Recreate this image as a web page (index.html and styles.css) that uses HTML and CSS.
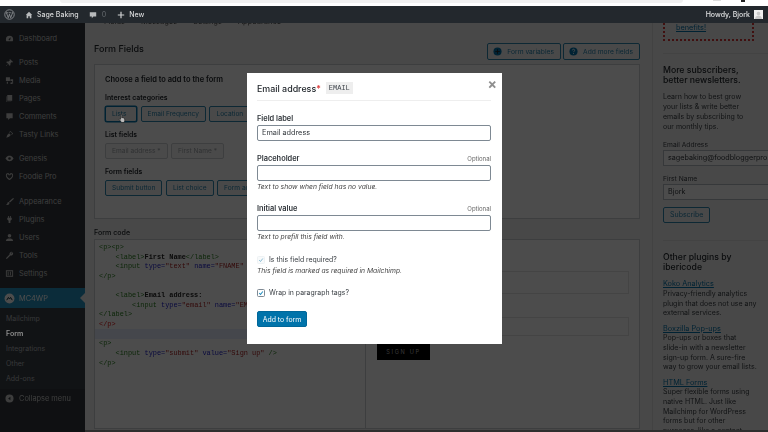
FILE: index.html
```html
<!DOCTYPE html>
<html lang="en">
<head>
<meta charset="utf-8">
<title>Form Fields</title>
<link rel="stylesheet" href="styles.css">
</head>
<body>
<div class="app">
  <div class="chrome"><div class="chrome-pill"></div><span class="chrome-dot"></span><span class="chrome-dot chrome-dark"></span></div>
  <header class="adminbar">
    <svg class="ab-logo" viewBox="0 0 20 20"><circle cx="10" cy="10" r="8.6" fill="none" stroke="currentColor" stroke-width="1.6"/><path d="M4.500 7l3.200 9 2.200-6.500L12.200 16l3.300-9M3.500 6.800h4M8.500 6.800h4M14 6.800h2.500" fill="none" stroke="currentColor" stroke-width="1.500"/></svg>
    <svg class="ab-icon home" viewBox="0 0 20 20"><path d="M10 2l8 8h-2v8h-4v-5H8v5H4v-8H2z" fill="currentColor"/></svg>
    <span class="ab-site">Sage Baking</span>
    <svg class="ab-icon bubble" viewBox="0 0 20 20"><path d="M2 3h16v11h-7l-4 4v-4H2z" fill="currentColor"/></svg>
    <span class="ab-count">0</span>
    <svg class="ab-icon plus" viewBox="0 0 20 20"><path d="M8.500 2h3v6.500H18v3h-6.500V18h-3v-6.500H2v-3h6.500z" fill="currentColor"/></svg>
    <span class="ab-new">New</span>
    <span class="ab-howdy">Howdy, Bjork</span>
    <span class="ab-avatar"><svg viewBox="0 0 20 20"><circle cx="10" cy="8" r="4" fill="#c9c9c9"/><path d="M2 20c1-6 5-7 8-7s7 1 8 7z" fill="#c9c9c9"/></svg></span>
  </header>
  <div class="workspace">
    <nav class="sidebar">
      <ul class="menu menu-first">
        <li><svg viewBox="0 0 20 20"><path d="M10 4a8 8 0 0 0-8 8c0 1.500.4 2.800 1 4h14c.6-1.200 1-2.500 1-4a8 8 0 0 0-8-8zm0 10a2 2 0 0 1-1-3.700L13 7l-1.300 5.400A2 2 0 0 1 10 14z"/></svg>Dashboard</li>
      </ul>
      <ul class="menu">
        <li><svg viewBox="0 0 20 20"><path d="M11 2l7 7-2 1-1-1-3 3 0 4-2 1-3-4-4 5-1-1 5-4-4-3 1-2 4 0 3-3-1-1z"/></svg>Posts</li>
        <li><svg viewBox="0 0 20 20"><path d="M2 3h9v8H2zM12 7h6v10h-2v-6h-4zM4 13h2.500v4H4z"/><circle cx="14" cy="16" r="2"/></svg>Media</li>
        <li><svg viewBox="0 0 20 20"><path d="M5 2h11v13H5zM3 5h1v12h10v1H3z"/></svg>Pages</li>
        <li><svg viewBox="0 0 20 20"><path d="M3 3h14v11h-6l-4 4v-4H3z"/></svg>Comments</li>
        <li><svg viewBox="0 0 20 20"><path d="M3 17l2-6 4-4 4 4-4 4zM9 5l3-3 6 6-3 3-1-1 2-2-4-4-2 2z"/></svg>Tasty Links</li>
      </ul>
      <ul class="menu">
        <li><svg viewBox="0 0 20 20"><path d="M1 10c3-5 6-6 9-6s6 1 9 6c-3 5-6 6-9 6s-6-1-9-6zm9 3a3 3 0 1 0 0-6 3 3 0 0 0 0 6z"/></svg>Genesis</li>
        <li><svg viewBox="0 0 20 20"><path d="M10 18C3 13 2 10 2 7a4 4 0 0 1 8-1 4 4 0 0 1 8 1c0 3-1 6-8 11zm0-3c5-3.500 6-6 6-8a2 2 0 0 0-4 0h-4a2 2 0 0 0-4 0c0 2 1 4.500 6 8z"/></svg>Foodie Pro</li>
      </ul>
      <ul class="menu menu-wide">
        <li><svg viewBox="0 0 20 20"><path d="M18 2l-9 8 2 2 9-8zM8 11c-3 0-3 3-3 4 0 1-1 2-3 2 3 2 8 1 8-4z"/></svg>Appearance</li>
        <li><svg viewBox="0 0 20 20"><path d="M7 2h2v4h2V2h2v4h2v4l-3 3v5H8v-5l-3-3V6h2z"/></svg>Plugins</li>
        <li><svg viewBox="0 0 20 20"><circle cx="10" cy="6" r="4"/><path d="M2 18c0-5 4-6 8-6s8 1 8 6z"/></svg>Users</li>
        <li><svg viewBox="0 0 20 20"><path d="M17 3l-3 3-1-1 3-3a5 5 0 0 0-6 6L2 16l2 2 8-8a5 5 0 0 0 6-6z"/></svg>Tools</li>
        <li><svg viewBox="0 0 20 20"><path d="M2 3h16v14H2zm2 2v10h12V5zM6 6h2v8H6zm5 0h2v8h-2z"/></svg>Settings</li>
      </ul>
      <div class="menu-current">
        <svg viewBox="0 0 20 20"><circle cx="10" cy="10" r="9"/><path d="M5 13l3-5 2 3 2-3 3 5" fill="none" stroke="#0c3242" stroke-width="1.800"/></svg>
        MC4WP<span class="menu-arrow"></span>
      </div>
      <ul class="submenu">
        <li>Mailchimp</li>
        <li class="submenu-current">Form</li>
        <li>Integrations</li>
        <li>Other</li>
        <li>Add-ons</li>
      </ul>
      <div class="collapse"><svg viewBox="0 0 20 20"><path d="M10 1a9 9 0 1 0 0 18 9 9 0 0 0 0-18zm2 5v8L7 10z"/></svg>Collapse menu</div>
    </nav>
    <main class="main">
      <div class="content">
        <div class="tabs"><span>Fields</span><span>Messages</span><span>Settings</span><span>Appearance</span></div>
        <div class="head-row">
          <h1>Form Fields</h1>
          <div class="head-actions">
            <button class="btn icon-btn"><svg viewBox="0 0 20 20"><circle cx="10" cy="10" r="9" fill="#0073aa"/><path d="M5 10h10M10 5v10" stroke="#23282d" stroke-width="2"/></svg>Form variables</button>
            <button class="btn icon-btn"><svg viewBox="0 0 20 20"><circle cx="10" cy="10" r="9" fill="#0073aa"/><path d="M7.500 7.500c0-3.500 5-3.500 5 0 0 2-2.500 2-2.500 4M10 13.500v2" fill="none" stroke="#fff" stroke-width="2"/></svg>Add more fields</button>
          </div>
        </div>
        <section class="chooser">
          <h2>Choose a field to add to the form</h2>
          <h3>Interest categories</h3>
          <div class="btn-row"><button class="btn btn-focus">Lists</button><button class="btn">Email Frequency</button><button class="btn">Location</button></div>
          <h3>List fields</h3>
          <div class="btn-row"><button class="btn btn-off">Email address *</button><button class="btn btn-off">First Name *</button></div>
          <h3>Form fields</h3>
          <div class="btn-row"><button class="btn">Submit button</button><button class="btn">List choice</button><button class="btn">Form action</button></div>
        </section>
        <h4 class="code-title">Form code</h4>
        <div class="code-wrap">
<pre class="code"><span class="t-g">&lt;p&gt;&lt;p&gt;</span>
    <span class="t-g">&lt;label&gt;</span><b>First Name</b><span class="t-g">&lt;/label&gt;</span>
    <span class="t-g">&lt;input</span> <span class="t-b">type=</span><span class="t-r">"text"</span> <span class="t-b">name=</span><span class="t-r">"FNAME"</span> <span class="t-g">/&gt;</span>
<span class="t-g">&lt;/p&gt;</span>

    <span class="t-g">&lt;label&gt;</span><b>Email address:</b>
        <span class="t-g">&lt;input</span> <span class="t-b">type=</span><span class="t-r">"email"</span> <span class="t-b">name=</span><span class="t-r">"EMAIL"</span> <span class="t-g">/&gt;</span>
<span class="t-g">&lt;/label&gt;</span>
<span class="t-red">&lt;/p&gt;</span>
<span class="code-hl"> </span><span class="t-g">&lt;p&gt;</span>
    <span class="t-g">&lt;input</span> <span class="t-b">type=</span><span class="t-r">"submit"</span> <span class="t-b">value=</span><span class="t-r">"Sign up"</span> <span class="t-g">/&gt;</span>
<span class="t-g">&lt;/p&gt;</span></pre>
          <div class="preview">
            <div class="pv-input pv-a"></div>
            <div class="pv-input pv-b"></div>
            <div class="signup">SIGN UP</div>
          </div>
        </div>
      </div>
      <aside class="side">
        <div class="promo"><a href="#">benefits!</a></div>
        <section class="side-block side-news">
          <h3>More subscribers, better newsletters.</h3>
          <p>Learn how to best grow your lists &amp; write better emails by subscribing to our monthly tips.</p>
          <label>Email Address</label>
          <div class="side-input">sagebaking@foodbloggerpro.com</div>
          <label>First Name</label>
          <div class="side-input">Bjork</div>
          <button class="btn side-btn">Subscribe</button>
        </section>
        <section class="side-block side-plugins">
          <h3>Other plugins by ibericode</h3>
          <a href="#">Koko Analytics</a>
          <p>Privacy-friendly analytics<br>plugin that does not use any<br>external services.</p>
          <a href="#">Boxzilla Pop-ups</a>
          <p>Pop-ups or boxes that<br>slide-in with a newsletter<br>sign-up form. A sure-fire<br>way to grow your email lists.</p>
          <a href="#">HTML Forms</a>
          <p>Super flexible forms using<br>native HTML. Just like<br>Mailchimp for WordPress<br>forms but for other<br>purposes, like a contact<br>form.</p>
        </section>
      </aside>
    </main>
    <div class="overlay"></div>
    <svg class="cursor" viewBox="0 0 14 16"><path d="M4 1.500c1-.6 1.800 0 1.800 1V7l1-.3 1 .3 1 .2 1.200.5.600 3-1 3.500H5.500L2 9.500l.6-1 1.400.8z" fill="#bbb" stroke="#000" stroke-width=".8"/></svg>
  </div>
  <div class="modal">
    <div class="modal-head">
      <span class="modal-title">Email address<em>*</em></span>
      <code>EMAIL</code>
      <span class="modal-close">×</span>
    </div>
    <div class="field field-first">
      <div class="field-label"><strong>Field label</strong></div>
      <div class="input">Email address</div>
    </div>
    <div class="field">
      <div class="field-label"><strong>Placeholder</strong><small>Optional</small></div>
      <div class="input"></div>
      <p class="hint">Text to show when field has no value.</p>
    </div>
    <div class="field">
      <div class="field-label"><strong>Initial value</strong><small>Optional</small></div>
      <div class="input"></div>
      <p class="hint">Text to prefill this field with.</p>
    </div>
    <div class="check check-off"><span class="box box-off"><svg viewBox="0 0 10 10"><path d="M2 5l2.200 2.500L8 2.500" fill="none" stroke="#7eb6d0" stroke-width="1.500"/></svg></span>Is this field required?</div>
    <p class="hint hint-req">This field is marked as required in Mailchimp.</p>
    <div class="check check-wrap"><span class="box"><svg viewBox="0 0 10 10"><path d="M2 5l2.200 2.500L8 2.500" fill="none" stroke="#1e8cbe" stroke-width="1.700"/></svg></span>Wrap in paragraph tags?</div>
    <button class="primary">Add to form</button>
  </div>
</div>
</body>
</html>
```
FILE: styles.css
```css
* { box-sizing: border-box; }
html, body { margin: 0; height: 100%; background: #000; }
body { font-family: Inter, "Liberation Sans", sans-serif; overflow: hidden; }
ul { list-style: none; margin: 0; padding: 0; }
h1, h2, h3, h4, p { margin: 0; }

.app { position: relative; width: 768px; height: 432px; overflow: hidden; display: flex; flex-direction: column; background: #f1f1f1; }

.chrome { height: 6px; background: #fff; padding-left: 60px; flex: none; display: flex; }
.chrome-pill { width: 623px; height: 3px; background: #f1f1f1; border-radius: 0 0 3px 3px; }
.chrome-dot { width: 8px; height: 1px; margin-left: 30px; background: #ddd; }
.chrome-dark { width: 4px; height: 2px; margin-left: 20px; background: #222; }

.adminbar { position: relative; z-index: 3; height: 17px; flex: none; background: #23282d; color: #c9cbcd; display: flex; align-items: center; font-size: 7px; font-weight: 500; padding-right: 5px; filter: blur(.4px); }
.ab-logo { width: 11px; height: 11px; margin-left: 4px; color: #8f9396; }
.ab-icon { width: 8px; height: 8px; color: #b8babc; }
.home { margin-left: 10px; }
.ab-site { margin-left: 4px; color: #d6d7d8; }
.bubble { margin-left: 10px; }
.ab-count { margin-left: 5px; color: #5d6266; }
.plus { margin-left: 11px; color: #d0d1d2; }
.ab-new { margin-left: 4px; color: #d6d7d8; }
.ab-howdy { margin-left: auto; color: #dfe0e1; }
.ab-avatar { margin-left: 4px; width: 9px; height: 9px; background: #f0f0f0; display: block; }
.ab-avatar svg { display: block; width: 9px; height: 9px; }

.workspace { position: relative; flex: 1; min-height: 0; display: flex; filter: blur(.75px); }

.sidebar { width: 85px; flex: none; background: #32373c; color: #ccc; font-size: 7.4px; padding-top: 6px; }
.sidebar svg { width: 9px; height: 9px; margin: 0 5px 0 5px; fill: currentColor; flex: none; }
.menu + .menu { margin-top: 6px; }
.menu-wide { margin-top: 7px !important; }
.menu li { height: 18px; display: flex; align-items: center; }
.menu-current { position: relative; margin-top: 6px; height: 20px; display: flex; align-items: center; background: #2594c2; color: #fff; }
.menu-current svg { width: 11px; height: 11px; margin: 0 4px 0 4px; }
.menu-arrow { position: absolute; right: 0; top: 5px; border: 5px solid transparent; border-right-color: #f1f1f1; border-left: 0; }
.submenu { background: #3b4046; padding: 3px 0 3px; font-size: 7px; color: #b4b9be; }
.submenu li { height: 15px; line-height: 15px; padding-left: 6px; }
.submenu-current { position: relative; z-index: 3; color: #8f8f8f; font-weight: 600; }
.collapse { display: flex; align-items: center; height: 18px; }

.main { flex: 1; min-width: 0; display: flex; overflow: hidden; padding-left: 9px; border-bottom: 2px solid #999; }
.content { width: 546px; flex: none; }

.tabs { display: flex; height: 10px; margin-top: -6px; font-size: 7.5px; line-height: 10px; color: #444; padding-left: 10px; gap: 16px; }

.head-row { display: flex; justify-content: space-between; align-items: center; height: 17px; margin-top: 16px; }
h1 { font-size: 9px; font-weight: 500; color: #23282d; margin-bottom: 7px; }
.head-actions { display: flex; gap: 2px; }

.btn { font: inherit; font-size: 6.6px; height: 16px; padding: 0 6px; border: 1px solid #2d86ad; border-radius: 2px; background: #f3f5f6; color: #2a84ae; display: inline-flex; align-items: center; white-space: nowrap; }
.icon-btn { height: 17px; font-size: 6.7px; padding: 0 6px 0 5px; }
.icon-btn svg { width: 9px; height: 9px; margin-right: 5px; }
.btn-focus { border-width: 1.500px; border-color: #0073aa; box-shadow: 0 0 0 .5px #0073aa; min-width: 32px; }
.btn-off { color: #a0a5aa; border-color: #ccd0d4; background: #f7f7f7; }

.chooser { margin-top: 4px; height: 155px; background: #fff; border: 1px solid #ccd0d4; padding: 9px 10px; overflow: hidden; }
.chooser h2 { font-size: 7.5px; font-weight: 600; color: #23282d; line-height: 11px; }
.chooser h3 { font-size: 6.9px; font-weight: 600; color: #23282d; line-height: 10px; margin-top: 8px; }
.btn-row { display: flex; gap: 3.500px; margin-top: 3px; }

.code-title { margin-top: 8px; height: 12px; font-size: 7.1px; line-height: 12px; font-weight: 500; color: #23282d; }
.code-wrap { display: flex; height: 190px; background: #fff; border: 1px solid #ccd0d4; }
.code { margin: 0; width: 271px; flex: none; padding: 3px 0 0 4px; font-family: "Liberation Mono", monospace; font-size: 6.9px; line-height: 9.6px; color: #333; border-right: 1px solid #ccd0d4; overflow: hidden; white-space: pre; }
.code b { color: #222; }
.t-g { color: #2b8020; }
.t-b { color: #2222cc; }
.t-r { color: #aa2222; }
.t-red { color: #dd1111; }
.code-hl { display: block; margin: 0 0 0 -4px; height: 10px; background: #e6eeff; }

.preview { flex: 1; padding: 31px 10px 0 11px; }
.pv-input { border: 1px solid #e4e4e4; }
.pv-a { height: 23px; }
.pv-b { height: 19px; margin-top: 23px; }
.signup { margin-top: 8px; width: 53px; height: 16px; background: #000; color: #bbb; font-size: 5.6px; letter-spacing: 1.700px; display: flex; align-items: center; justify-content: center; }

.side { flex: 1; margin-left: 12px; border-left: 1px solid #ddd; padding-left: 10px; min-width: 0; overflow: hidden; }
.promo { width: 91px; height: 18px; border: 2px dotted #d63638; border-top: 0; padding-left: 11px; font-size: 7.300px; line-height: 10px; }
.promo a, .side-plugins a { color: #0073aa; text-decoration: underline; }
.side-block { font-size: 7px; line-height: 9.600px; color: #3c4146; }
.side-block h3 { font-size: 8.700px; line-height: 9.800px; font-weight: 500; color: #23282d; width: 95px; }
.side-block p { white-space: normal; }
.side-news p { width: 93px; line-height: 10.300px; }
.side-news { margin-top: 12px; padding-top: 12px; border-top: 1px solid #e2e2e2; }
.side-news h3 { margin-bottom: 6px; }
.side-news label { display: block; margin-top: 7px; line-height: 10px; font-size: 6.700px; }
.side-input { height: 16px; background: #fff; border: 1px solid #b5bcc2; border-right: 0; padding-left: 4px; margin-right: -60px; line-height: 14px; white-space: nowrap; font-size: 7.200px; color: #32373c; margin-bottom: 8px; }
.side-btn { display: flex; height: 16px; font-size: 7px; padding: 0 6px; margin-top: -1px; }
.side-plugins { margin-top: 17px; padding-top: 12px; border-top: 1px solid #e2e2e2; }
.side-plugins h3 { margin-bottom: 7px; }
.side-plugins a { display: block; font-size: 7.300px; margin-top: 6px; }
.side-plugins h3 + a { margin-top: 0; }

.overlay { position: absolute; inset: 0; background: rgba(0,0,0,.7); z-index: 2; }
.cursor { position: absolute; left: 118px; top: 90px; width: 9px; height: 11px; z-index: 3; }

.modal { position: absolute; left: 247px; top: 73px; width: 255px; height: 271px; background: #fff; z-index: 4; padding: 0 11px 0 10px; color: #32373c; font-size: 7.300px; filter: blur(.4px); }
.modal-head { position: relative; height: 28px; display: flex; align-items: center; gap: 5px; padding-top: 3px; border-bottom: 1px solid #eee; }
.modal-title { font-size: 8.900px; font-weight: 500; color: #23282d; }
.modal-title em { color: #dc3232; font-style: normal; }
code { font-family: "Liberation Mono", monospace; font-size: 7px; background: #eee; padding: 2px 3px; color: #40464d; }
.modal-close { position: absolute; right: -6px; top: 3px; font-size: 14px; line-height: 15px; font-weight: 700; color: #8f8f8f; }

.field { margin-top: 11px; }
.field-first { margin-top: 12px; margin-bottom: 12px; }
.field-label { display: flex; justify-content: space-between; align-items: baseline; height: 12px; line-height: 11px; }
.field-label strong { font-size: 7.400px; font-weight: 600; color: #32373c; }
.field-label small { font-size: 6px; color: #666; }
.input { height: 16px; border: 1px solid #7e8993; border-radius: 2px; padding-left: 4px; line-height: 14px; font-size: 7.300px; color: #32373c; }
.hint { font-size: 6.750px; font-style: italic; line-height: 11px; color: #444; }
.check { display: flex; align-items: center; gap: 4px; font-size: 6.900px; height: 11px; color: #3c4146; }
.check-off { margin-top: 12px; }
.check-wrap { margin-top: 11px; }
.box { width: 8px; height: 8px; border: 1px solid #7e8993; border-radius: 1.500px; display: block; flex: none; }
.box svg { display: block; width: 6px; height: 6px; }
.box-off { border-color: #eef2f4; background: #f8fafb; }
.primary { display: block; margin-top: 13px; width: 50px; height: 16px; padding: 0; border: 1px solid #006799; border-radius: 2px; background: #0073aa; color: #fff; font: inherit; font-size: 6.900px; }
```
